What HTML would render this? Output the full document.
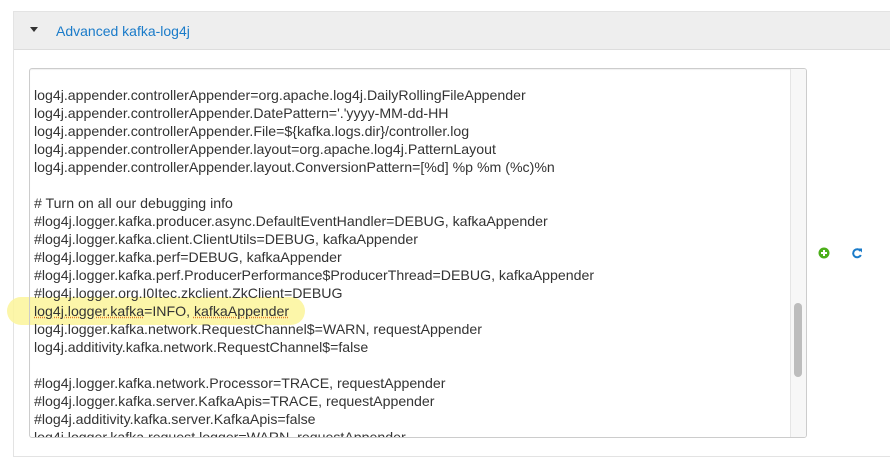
<!DOCTYPE html>
<html><head><style>
body{margin:0;width:890px;height:459px;background:#fff;position:relative;overflow:hidden;font-family:"Liberation Sans",Arial,sans-serif}
.panel{position:absolute;left:13px;top:11px;width:900px;height:446px;border:1px solid #e3e3e3;box-sizing:border-box}
.hdr{position:absolute;left:0;top:0;right:0;height:37px;background:#eeeeee;border-bottom:1px solid #ddd}
.tri{position:absolute;left:16px;top:15px;width:0;height:0;border-left:4px solid transparent;border-right:4px solid transparent;border-top:5px solid #333}
.title{position:absolute;left:42px;top:11px;font-size:14px;color:#1a7bc9}
.ta{position:absolute;left:29px;top:68px;width:778px;height:370px;border:1px solid #ccc;border-radius:3px;box-sizing:border-box;overflow:hidden;box-shadow:inset 0 1px 1px rgba(0,0,0,.06)}
.txt{position:absolute;left:4px;top:17px;font-size:14.15px;line-height:18px;color:#333;white-space:pre}
.sb{position:absolute;right:0;top:0;width:15px;height:100%;background:#f7f7f7;border-left:1px solid #e5e5e5}
.th{position:absolute;left:3px;top:234px;width:8px;height:74px;background:#bdbdbd;border-radius:4px}
.hl{position:absolute;left:7px;top:297px;width:298px;height:28px;background:#fbf59a;border-radius:14px;opacity:.85}
.u{text-decoration:underline dotted #e0772a}
</style></head><body>
<div class="panel"><div class="hdr"><div class="tri"></div><div class="title">Advanced kafka-log4j</div></div></div>
<div class="hl"></div>
<div class="ta">
<div class="txt">log4j.appender.controllerAppender=org.apache.log4j.DailyRollingFileAppender
log4j.appender.controllerAppender.DatePattern='.'yyyy-MM-dd-HH
log4j.appender.controllerAppender.File=${kafka.logs.dir}/controller.log
log4j.appender.controllerAppender.layout=org.apache.log4j.PatternLayout
log4j.appender.controllerAppender.layout.ConversionPattern=[%d] %p %m (%c)%n

# Turn on all our debugging info
#log4j.logger.kafka.producer.async.DefaultEventHandler=DEBUG, kafkaAppender
#log4j.logger.kafka.client.ClientUtils=DEBUG, kafkaAppender
#log4j.logger.kafka.perf=DEBUG, kafkaAppender
#log4j.logger.kafka.perf.ProducerPerformance$ProducerThread=DEBUG, kafkaAppender
#log4j.logger.org.I0Itec.zkclient.ZkClient=DEBUG
<span class="u">log4j.logger.kafka</span>=INFO, <span class="u">kafkaAppender</span>
log4j.logger.kafka.network.RequestChannel$=WARN, requestAppender
log4j.additivity.kafka.network.RequestChannel$=false

#log4j.logger.kafka.network.Processor=TRACE, requestAppender
#log4j.logger.kafka.server.KafkaApis=TRACE, requestAppender
#log4j.additivity.kafka.server.KafkaApis=false
log4j.logger.kafka.request.logger=WARN, requestAppender</div>
<div class="sb"><div class="th"></div></div>
</div>
<svg style="position:absolute;left:818px;top:247px" width="12" height="12" viewBox="0 0 12 12"><circle cx="6" cy="6" r="5.5" fill="#4caf1a"/><path d="M6 3v6M3 6h6" stroke="#fff" stroke-width="2"/></svg>
<svg style="position:absolute;left:851px;top:247px" width="12" height="12" viewBox="0 0 12 12"><path d="M9.5 4A4 4 0 1 0 9.8 8" fill="none" stroke="#1a7bc9" stroke-width="2"/><path d="M7 1.5L11 1.5 11 5.5Z" fill="#1a7bc9"/></svg>
</body></html>
